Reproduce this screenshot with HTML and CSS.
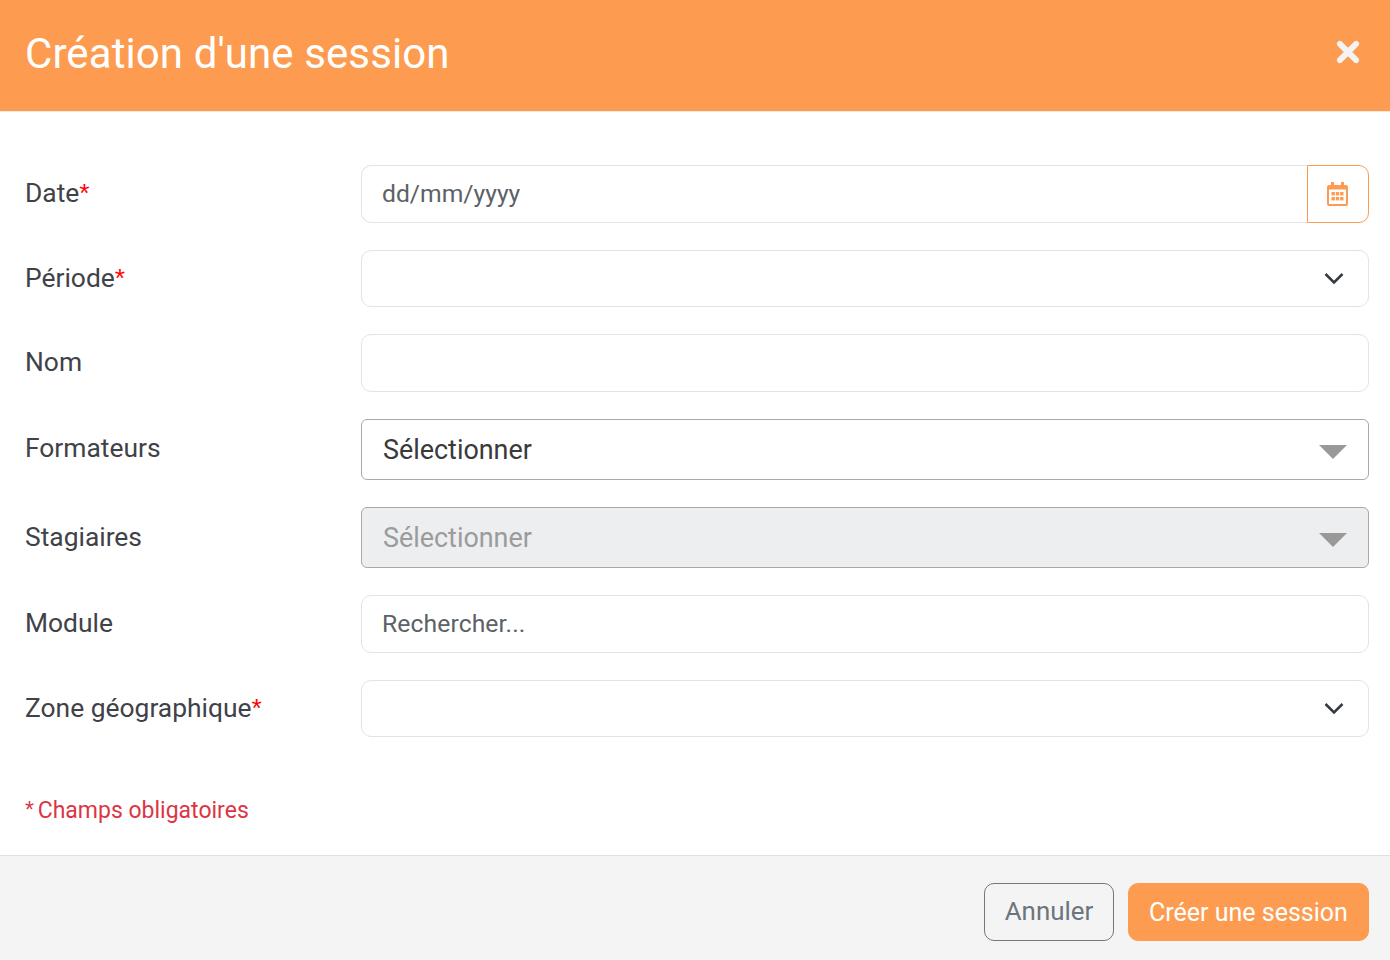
FILE: index.html
```html
<!DOCTYPE html>
<html lang="fr">
<head>
<meta charset="utf-8">
<title>Création d'une session</title>
<link rel="stylesheet" href="styles.css">
</head>
<body>
<div class="modal">
  <header class="head">
    <h1 class="title">Création d'une session</h1>
    <svg class="close" viewBox="0 0 24 24" width="26" height="26"><path d="M4.500 4.500L19.500 19.500M19.500 4.500L4.500 19.500" fill="none" stroke="#f4f4f4" stroke-width="5.400" stroke-linecap="round"/></svg>
  </header>
  <form class="body">
    <div class="row">
      <label class="lab">Date<span class="req">*</span></label>
      <div class="group">
        <div class="field field-date">dd/mm/yyyy</div>
        <div class="cal">
          <svg viewBox="0 0 21 24" width="21" height="24"><path fill="#fd9c50" d="M4 0h3v3h7V0h3v3h2a2 2 0 0 1 2 2v17a2 2 0 0 1-2 2H2a2 2 0 0 1-2-2V5a2 2 0 0 1 2-2h2z"/><rect x="2" y="7.500" width="17" height="14.500" fill="#fff"/><g fill="#fd9c50"><rect x="4.500" y="10" width="3.400" height="3.400"/><rect x="8.800" y="10" width="3.400" height="3.400"/><rect x="13.100" y="10" width="3.400" height="3.400"/><rect x="4.500" y="15" width="3.400" height="3.400"/><rect x="8.800" y="15" width="3.400" height="3.400"/><rect x="13.100" y="15" width="3.400" height="3.400"/></g></svg>
        </div>
      </div>
    </div>
    <div class="row">
      <label class="lab">Période<span class="req">*</span></label>
      <div class="field field-sel">
        <svg class="chev" viewBox="0 0 20 13" width="20" height="13"><path d="M1.500 2L10 10.500 18.500 2" fill="none" stroke="#343a40" stroke-width="2.500"/></svg>
      </div>
    </div>
    <div class="row">
      <label class="lab">Nom</label>
      <div class="field field-tall"></div>
    </div>
    <div class="row">
      <label class="lab lab-high">Formateurs</label>
      <div class="multi"><span>Sélectionner</span><i class="tri"></i></div>
    </div>
    <div class="row">
      <label class="lab">Stagiaires</label>
      <div class="multi multi-off"><span>Sélectionner</span><i class="tri"></i></div>
    </div>
    <div class="row">
      <label class="lab">Module</label>
      <div class="field field-tall field-search">Rechercher...</div>
    </div>
    <div class="row">
      <label class="lab">Zone géographique<span class="req">*</span></label>
      <div class="field field-sel">
        <svg class="chev" viewBox="0 0 20 13" width="20" height="13"><path d="M1.500 2L10 10.500 18.500 2" fill="none" stroke="#343a40" stroke-width="2.500"/></svg>
      </div>
    </div>
    <p class="note"><span class="note-star">*</span> Champs obligatoires</p>
  </form>
  <footer class="foot">
    <button class="btn btn-ghost" type="button">Annuler</button>
    <button class="btn btn-main" type="button">Créer une session</button>
  </footer>
</div>
</body>
</html>
```
FILE: styles.css
```css
* { box-sizing: border-box; }
html, body { margin: 0; padding: 0; }
body { background: #fff; color: #3f4247; font-family: "Roboto", "Liberation Sans", sans-serif; }
.modal { width: 1390px; height: 960px; display: flex; flex-direction: column; }
.head { height: 112px; background: #fd9c50; display: flex; align-items: center; justify-content: space-between; padding: 0 29px 0 25px; border-bottom: 1px solid #f3e9df; flex: none; }
.title { margin: 0 0 2px; font-size: 42px; font-weight: 400; color: #fff; line-height: 1.2; letter-spacing: 0.090px; }
.close { display: block; margin-bottom: 8px; }
.body { flex: 1; padding: 53px 21px 0 25px; display: flex; flex-direction: column; gap: 27px; }
.row { display: flex; align-items: center; }
.lab { width: 336px; flex: none; font-size: 26.400px; line-height: 30px; padding-bottom: 2px; }
.lab-high { padding-bottom: 4px; }
.req { color: #f00; font-family: "Liberation Sans", sans-serif; font-weight: 400; }
.group { flex: 1; display: flex; height: 58px; }
.field { flex: 1; border: 1px solid #e1e3e8; border-radius: 10px; background: #fff; font-size: 24.700px; color: #5c6167; display: flex; align-items: center; padding: 0 20px 2px; }
.field-date { border-right: 0; border-radius: 10px 0 0 10px; }
.cal { width: 62px; border: 1px solid #fd9c50; border-radius: 0 10px 10px 0; display: flex; align-items: center; justify-content: center; padding-right: 1px; }
.field-sel { height: 57px; justify-content: flex-end; padding: 0 24px 0 0; }
.field-tall { height: 58px; }
.field-search { letter-spacing: 0.100px; }
.chev { display: block; }
.multi { flex: 1; height: 61px; border: 1px solid #a9a9a9; border-radius: 6px; background: #fff; display: flex; align-items: center; justify-content: space-between; padding: 0 21px; font-size: 26.900px; color: #3a3a3a; }
.multi-off { background: #edeef0; color: #9b9b9b; }
.tri { width: 0; height: 0; border-left: 14px solid transparent; border-right: 14px solid transparent; border-top: 14px solid #999; margin-top: 4px; }
.note { margin: 32px 0 0; font-size: 23px; line-height: 28px; color: #dc3545; }
.note-star { font-family: "Liberation Sans", sans-serif; margin-right: -2px; }
.foot { height: 105px; flex: none; background: #f4f4f4; border-top: 1px solid #e0e0e0; display: flex; justify-content: flex-end; align-items: flex-start; gap: 14px; padding: 27px 21px 0 0; }
.btn { height: 58px; border-radius: 10px; font-family: inherit; font-size: 25px; padding: 0; cursor: pointer; }
.btn-ghost { width: 130px; background: transparent; border: 1px solid #777; color: #6c757d; font-size: 25.900px; padding-bottom: 2px; }
.btn-main { width: 241px; background: #fd9c50; border: 1px solid #fd9c50; color: #fff; }
```
